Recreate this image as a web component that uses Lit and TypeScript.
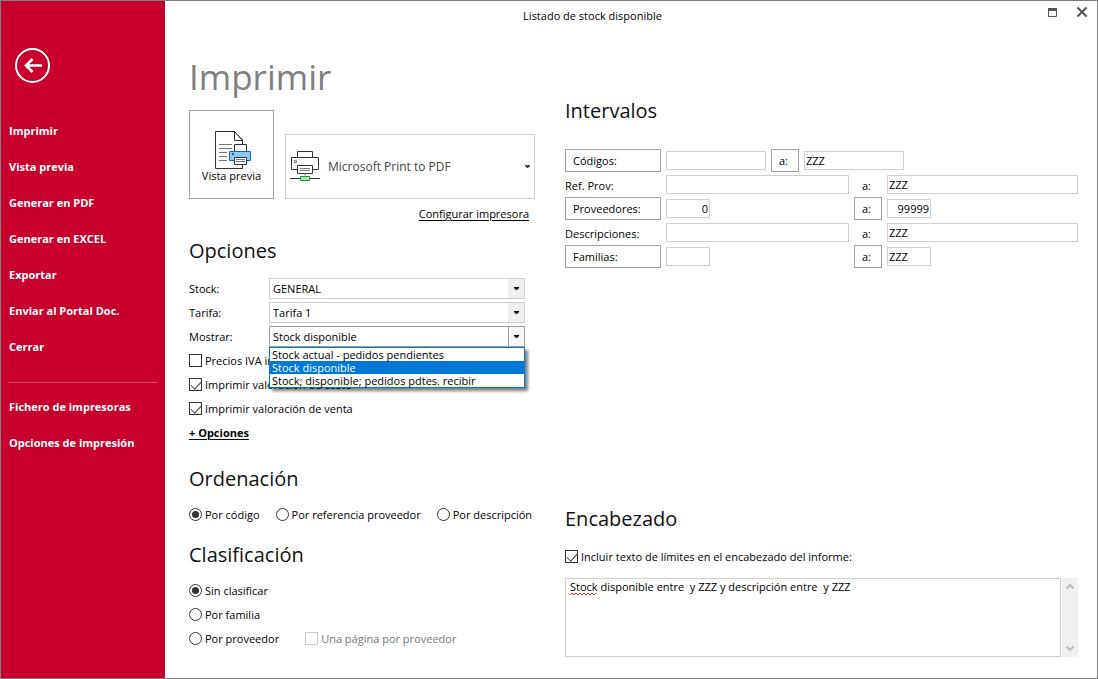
import { LitElement, html, css, svg, nothing } from "lit";
import { customElement, property } from "lit/decorators.js";

const backIcon = svg`<svg width="36" height="36" viewBox="0 0 36 36" fill="none" stroke="#fff" aria-hidden="true">
  <circle cx="17.5" cy="17.5" r="16.5" stroke-width="2"/>
  <path d="M27 17.5H11M17.500 11l-6.500 6.500 6.500 6.500" stroke-width="2.6"/>
</svg>`;

const previewIcon = svg`<svg width="37" height="38" viewBox="0 0 37 38" fill="none" aria-hidden="true">
  <path d="M.5.5h19l8 8.500v28.500H.5z" fill="#fff" stroke="#333"/>
  <path d="M19.500.5v9h8z" fill="#fff" stroke="#333"/>
  <path d="M4 13.500h13M4 17.500h13M4 21.500h8M4 25.500h8M4 29.500h8" stroke="#777"/>
  <path d="M19.500 20v-6.500h12V20" fill="#fff" stroke="#333"/>
  <path d="M14.500 20.500h21v9h-21z" fill="#91c6ef" stroke="#1068b5"/>
  <path d="M17 22h2v2h-2z" fill="#1068b5"/>
  <path d="M19.500 26.500h12v7h-12z" fill="#fff" stroke="#333"/>
  <path d="M21 28.500h9M21 30.500h9" stroke="#777"/>
</svg>`;

const printerIcon = svg`<svg width="30" height="31" viewBox="0 0 30 31" fill="none" aria-hidden="true">
  <path d="M7.500 6V.5h15V6" stroke="#333"/>
  <path d="M7 18.500H1.500v-12h27v12H23" stroke="#333"/>
  <path d="M4.500 9.500h2v2h-2z" stroke="#777"/>
  <path d="M7.500 14.500h15v8h-15z" fill="#fff" stroke="#333"/>
  <path d="M10 17.500h10M10 19.500h10" stroke="#777"/>
  <path d="M15 23v2" stroke="#999"/>
  <path d="M0 27.500h30" stroke="#333"/>
  <path d="M10.500 25.500h9v4h-9z" fill="#b4e2c3" stroke="#0f9a3c"/>
</svg>`;

const caret = svg`<svg class="caret" width="5" height="3" viewBox="0 0 5 3" aria-hidden="true"><path d="M0 0h5v1L3 3H2L0 1z" fill="currentColor"/></svg>`;

const shared = css`
  * { box-sizing: border-box; }
  button, input, select, textarea { font: inherit; color: inherit; margin: 0; border-radius: 0; }
  button { background: none; border: 0; padding: 0; text-align: left; }
`;

@customElement("side-menu")
class SideMenu extends LitElement {
  static styles = [shared, css`
    :host { display: block; background: #c8002d; color: #fff; padding: 47px 8px 0 7px; font: 700 11px/36px "Open Sans", sans-serif; }
    .back { display: block; width: 36px; height: 36px; margin: 0 0 29px 7px; }
    .back svg { display: block; }
    ul { list-style: none; margin: 0; padding: 0; }
    ul + ul { border-top: 1px solid #d24a62; margin-top: 17px; padding-top: 6px; }
    .item { display: block; width: 100%; padding-left: 1px; white-space: nowrap; }
  `];
  render() {
    const groups = [
      ["Imprimir", "Vista previa", "Generar en PDF", "Generar en EXCEL", "Exportar", "Enviar al Portal Doc.", "Cerrar"],
      ["Fichero de impresoras", "Opciones de impresión"],
    ];
    return html`<button class="back" aria-label="Volver">${backIcon}</button>
      <nav>${groups.map((g) => html`<ul>${g.map((t) => html`<li><button class="item">${t}</button></li>`)}</ul>`)}</nav>`;
  }
}

@customElement("combo-field")
class ComboField extends LitElement {
  @property() label = "";
  @property() value = "";
  @property({ attribute: false }) options: string[] = [];
  @property({ type: Boolean }) open = false;
  static styles = [shared, css`
    :host { display: flex; align-items: center; height: 24px; }
    label { width: 80px; }
    .box { position: relative; width: 256px; height: 21px; margin-bottom: 1px; color: #000; }
    select { appearance: none; width: 100%; height: 100%; border: 1px solid #d0d0d0; background: #fff; padding: 1px 20px 0 3px; outline: 0; display: block; }
    .arrow { position: absolute; top: 1px; right: 1px; bottom: 1px; width: 16px; background: #f0f0f0; display: grid; place-items: center; pointer-events: none; }
    .open select { border-color: #a0a0a0; }
    .open .arrow { border-left: 1px solid #a0a0a0; background: #f7f7f7; }
    .list { position: absolute; z-index: 2; top: 100%; left: 0; right: 0; margin: 0; padding: 0; list-style: none; border: 1px solid #0078d7; background: #fff; box-shadow: 3px 3px 3px rgba(0, 0, 0, .5); line-height: 13px; }
    .list li { padding: 0 2px; white-space: nowrap; }
    .list .on { background: #0078d7; color: #fff; }
  `];
  render() {
    return html`<label for="s">${this.label}</label>
      <div class="box ${this.open ? "open" : ""}">
        <select id="s">${(this.options.length ? this.options : [this.value]).map((o) => html`<option ?selected=${o === this.value}>${o}</option>`)}</select>
        <span class="arrow">${caret}</span>
        ${this.open
          ? html`<ul class="list" role="listbox" aria-label=${this.label}>${this.options.map((o) => html`<li role="option" aria-selected=${o === this.value ? "true" : "false"} class=${o === this.value ? "on" : ""}>${o}</li>`)}</ul>`
          : nothing}
      </div>`;
  }
}

type Range = { label: string; button: boolean; size: string; from: string; to: string };
const ranges: Range[] = [
  { label: "Códigos:", button: true, size: "mid", from: "", to: "ZZZ" },
  { label: "Ref. Prov:", button: false, size: "wide", from: "", to: "ZZZ" },
  { label: "Proveedores:", button: true, size: "num", from: "0", to: "99999" },
  { label: "Descripciones:", button: false, size: "wide", from: "", to: "ZZZ" },
  { label: "Familias:", button: true, size: "short", from: "", to: "ZZZ" },
];

@customElement("app-root")
class AppRoot extends LitElement {
  static styles = [shared, css`
    :host { display: grid; grid-template-columns: 164px minmax(0, 1fr); min-height: 100vh; box-sizing: border-box; border: 1px solid #808080; background: #fff; color: #000; font: 11px/16px "Open Sans", sans-serif; }
    main { display: flex; flex-direction: column; }
    .titlebar { display: flex; height: 30px; }
    .title { flex: 1; text-align: center; line-height: 30px; }
    .tools { display: flex; width: 77px; padding: 4px 8px 0 0; justify-content: flex-end; gap: 17px; color: #555; }
    .tools button { height: 13px; }
    .tools svg { display: block; }
    .content { flex: 1; display: grid; grid-template-columns: 346px minmax(0, 1fr); column-gap: 30px; padding: 0 19px 21px 24px; }
    h1, h2 { font-weight: 400; margin: 0; }
    h1 { font-size: 35px; line-height: 50px; color: #808080; padding-top: 21px; margin-bottom: 8px; }
    h2 { font-size: 20px; line-height: 30px; color: #111; margin-bottom: 9px; }
    .options h2, .header h2 { margin-bottom: 11px; }
    .printers { display: flex; align-items: flex-end; gap: 11px; }
    .preview { width: 85px; height: 89px; border: 1px solid #a0a0a0; padding-top: 4px; display: flex; flex-direction: column; align-items: center; justify-content: center; text-align: center; line-height: 14px; }
    .preview svg { margin-left: 3px; }
    .printer { flex: 1; height: 65px; border: 1px solid #d0d0d0; display: flex; align-items: center; gap: 8px; padding: 0 4px; color: #444; font-size: 12px; }
    .printer .name { flex: 1; }
    a { color: inherit; text-decoration: underline; text-underline-offset: 2px; }
    .config { text-align: right; padding: 7px 6px 0 0; margin-bottom: 14px; }
    .options { margin-bottom: 19px; }
    .row { display: flex; align-items: center; height: 24px; white-space: nowrap; }
    .choices { gap: 16px; }
    .sorting { margin-bottom: 13px; }
    .more { font-weight: 700; }
    .check { display: flex; align-items: center; gap: 3px; }
    .check input { appearance: none; width: 13px; height: 13px; margin-bottom: 1px; border: 1px solid #333; background: #fff; flex: none; display: grid; place-items: center; }
    .check input[type="radio"] { border-radius: 50%; }
    .check input[type="radio"]:checked::before { content: ""; width: 7px; height: 7px; border-radius: 50%; background: #333; }
    .check input[type="checkbox"]:checked::before { content: ""; width: 9px; height: 5px; border: solid #444; border-width: 0 0 1.5px 1.5px; transform: translateY(-1px) rotate(-47deg); }
    .check input:disabled { border-color: #ccc; }
    .disabled { color: #777; margin-left: 10px; }
    .right { display: flex; flex-direction: column; padding-top: 65px; }
    .ranges { padding-top: 14px; }
    .range { display: grid; grid-template-columns: 96px minmax(0, 183fr) 28px minmax(0, 191fr); column-gap: 5px; align-items: end; height: 24px; }
    .range.mid { grid-template-columns: 96px 100px 28px 100px; }
    .range button { height: 23px; border: 1px solid #a0a0a0; padding: 0 7px; align-self: start; }
    .range span { line-height: 22px; }
    .range input { width: 100%; height: 19px; border: 1px solid #d0d0d0; padding: 0 1px; align-self: start; margin-top: 2px; outline: 0; }
    .range.num input, .range.short input { width: 44px; }
    .range.num input { text-align: right; }
    .to { padding-left: 8px; }
    .header { margin-top: auto; }
    .header .row { margin-bottom: 9px; }
    .note { display: flex; gap: 1px; height: 79px; }
    .paper { position: relative; flex: 1; }
    textarea { display: block; width: 100%; height: 100%; resize: none; border: 1px solid #d0d0d0; padding: 0 4px; outline: 0; overflow: hidden; }
    .wave { position: absolute; left: 5px; top: 14px; }
    .scroll { width: 16px; background: #f0f0f0; display: flex; flex-direction: column; justify-content: space-between; align-items: center; padding: 5px 0; }
    .scroll svg { display: block; }
  `];

  private check(label: string, checked = false) {
    return html`<label class="check"><input type="checkbox" .checked=${checked}>${label}</label>`;
  }
  private radio(name: string, label: string, checked = false) {
    return html`<label class="check"><input type="radio" name=${name} .checked=${checked}>${label}</label>`;
  }
  private range(r: Range) {
    return html`<div class="range ${r.size}">
      ${r.button ? html`<button>${r.label}</button>` : html`<span>${r.label}</span>`}
      <input aria-label="${r.label} desde" .value=${r.from}>
      ${r.button ? html`<button>a:</button>` : html`<span class="to">a:</span>`}
      <input aria-label="${r.label} hasta" .value=${r.to}>
    </div>`;
  }

  render() {
    return html`<side-menu></side-menu>
      <main>
        <header class="titlebar">
          <div class="title">Listado de stock disponible</div>
          <div class="tools">
            <button aria-label="Maximizar"><svg width="13" height="13" viewBox="0 0 13 13"><path d="M2.500 3.500h8v8h-8z" fill="none" stroke="currentColor"/><path d="M2 3h9v3H2z" fill="currentColor"/></svg></button>
            <button aria-label="Cerrar"><svg width="13" height="13" viewBox="0 0 13 13"><path d="M1.500 2.500l9 9M10.500 2.500l-9 9" stroke="currentColor" stroke-width="2"/></svg></button>
          </div>
        </header>
        <div class="content">
          <div>
            <h1>Imprimir</h1>
            <div class="printers">
              <button class="preview">${previewIcon}<span>Vista previa</span></button>
              <button class="printer">${printerIcon}<span class="name">Microsoft Print to PDF</span>${caret}</button>
            </div>
            <div class="config"><a href="#">Configurar impresora</a></div>
            <section class="options">
              <h2>Opciones</h2>
              <combo-field label="Stock:" value="GENERAL"></combo-field>
              <combo-field label="Tarifa:" value="Tarifa 1"></combo-field>
              <combo-field label="Mostrar:" value="Stock disponible" open
                .options=${["Stock actual - pedidos pendientes", "Stock disponible", "Stock; disponible; pedidos pdtes. recibir"]}></combo-field>
              <div class="row">${this.check("Precios IVA incluido")}</div>
              <div class="row">${this.check("Imprimir valoración de coste", true)}</div>
              <div class="row">${this.check("Imprimir valoración de venta", true)}</div>
              <div class="row"><a class="more" href="#">+ Opciones</a></div>
            </section>
            <section class="sorting">
              <h2>Ordenación</h2>
              <div class="row choices">
                ${this.radio("orden", "Por código", true)}
                ${this.radio("orden", "Por referencia proveedor")}
                ${this.radio("orden", "Por descripción")}
              </div>
            </section>
            <section>
              <h2>Clasificación</h2>
              <div class="row">${this.radio("clase", "Sin clasificar", true)}</div>
              <div class="row">${this.radio("clase", "Por familia")}</div>
              <div class="row choices">
                ${this.radio("clase", "Por proveedor")}
                <label class="check disabled"><input type="checkbox" disabled>Una página por proveedor</label>
              </div>
            </section>
          </div>
          <div class="right">
            <section>
              <h2>Intervalos</h2>
              <div class="ranges">${ranges.map((r) => this.range(r))}</div>
            </section>
            <section class="header">
              <h2>Encabezado</h2>
              <div class="row">${this.check("Incluir texto de límites en el encabezado del informe:", true)}</div>
              <div class="note">
                <div class="paper">
                  <textarea aria-label="Texto del encabezado" spellcheck="false" .value=${"Stock disponible entre  y ZZZ y descripción entre  y ZZZ"}></textarea>
                  <svg class="wave" width="28" height="4" viewBox="0 0 28 4" fill="none" aria-hidden="true"><path d="M0 3l2-2 2 2 2-2 2 2 2-2 2 2 2-2 2 2 2-2 2 2 2-2 2 2 2-2" stroke="#f00" stroke-width=".9"/></svg>
                </div>
                <div class="scroll">
                  <button aria-label="Subir"><svg width="8" height="8" viewBox="0 0 8 8"><path d="M.5 5.500L4 2l3.500 3.500" fill="none" stroke="#bbb" stroke-width="2"/></svg></button>
                  <button aria-label="Bajar"><svg width="8" height="8" viewBox="0 0 8 8"><path d="M.5 2.500L4 6l3.500-3.500" fill="none" stroke="#bbb" stroke-width="2"/></svg></button>
                </div>
              </div>
            </section>
          </div>
        </div>
      </main>`;
  }
}
